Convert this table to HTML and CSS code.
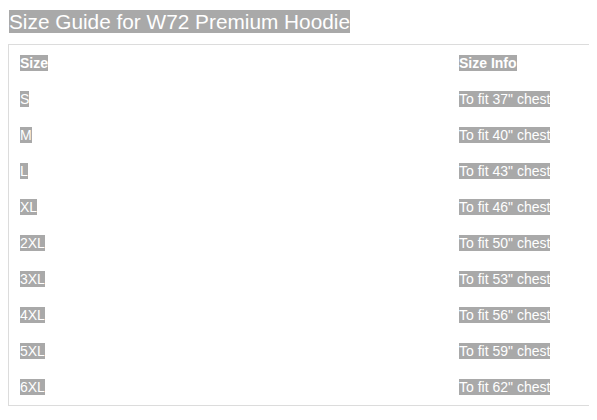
FILE: index.html
```html
<!DOCTYPE html>
<html>
<head>
<meta charset="utf-8">
<link rel="stylesheet" href="styles.css">
</head>
<body>
<h2 class="title"><span class="hl">Size Guide for W72 Premium Hoodie</span></h2>
<div class="guide">
  <div class="row head"><div class="cell"><span class="hl">Size</span></div><div class="cell"><span class="hl">Size Info</span></div></div>
  <div class="row"><div class="cell"><span class="hl">S</span></div><div class="cell"><span class="hl">To fit 37" chest</span></div></div>
  <div class="row"><div class="cell"><span class="hl">M</span></div><div class="cell"><span class="hl">To fit 40" chest</span></div></div>
  <div class="row"><div class="cell"><span class="hl">L</span></div><div class="cell"><span class="hl">To fit 43" chest</span></div></div>
  <div class="row"><div class="cell"><span class="hl">XL</span></div><div class="cell"><span class="hl">To fit 46" chest</span></div></div>
  <div class="row"><div class="cell"><span class="hl">2XL</span></div><div class="cell"><span class="hl">To fit 50" chest</span></div></div>
  <div class="row"><div class="cell"><span class="hl">3XL</span></div><div class="cell"><span class="hl">To fit 53" chest</span></div></div>
  <div class="row"><div class="cell"><span class="hl">4XL</span></div><div class="cell"><span class="hl">To fit 56" chest</span></div></div>
  <div class="row"><div class="cell"><span class="hl">5XL</span></div><div class="cell"><span class="hl">To fit 59" chest</span></div></div>
  <div class="row"><div class="cell"><span class="hl">6XL</span></div><div class="cell"><span class="hl">To fit 62" chest</span></div></div>
</div>
</body>
</html>
```
FILE: styles.css
```css
html {
  background: #fff;
}
body {
  margin: 8px;
  font-family: "Liberation Sans", Arial, sans-serif;
  color: #fff;
}
.hl {
  background: #a9a9a9;
  color: #fff;
}
.title {
  margin: 2px 0 10px 1px;
  font-size: 20.8px;
  line-height: 24px;
  font-weight: normal;
}
.guide {
  margin-right: -8px;
  border: 1px solid #dcdcdc;
  border-right: none;
  padding: 0 0 0 11px;
}
.row {
  display: grid;
  grid-template-columns: 439px auto;
  height: 36px;
  line-height: 36px;
  font-size: 14px;
}
.row.head {
  font-weight: bold;
}
```
